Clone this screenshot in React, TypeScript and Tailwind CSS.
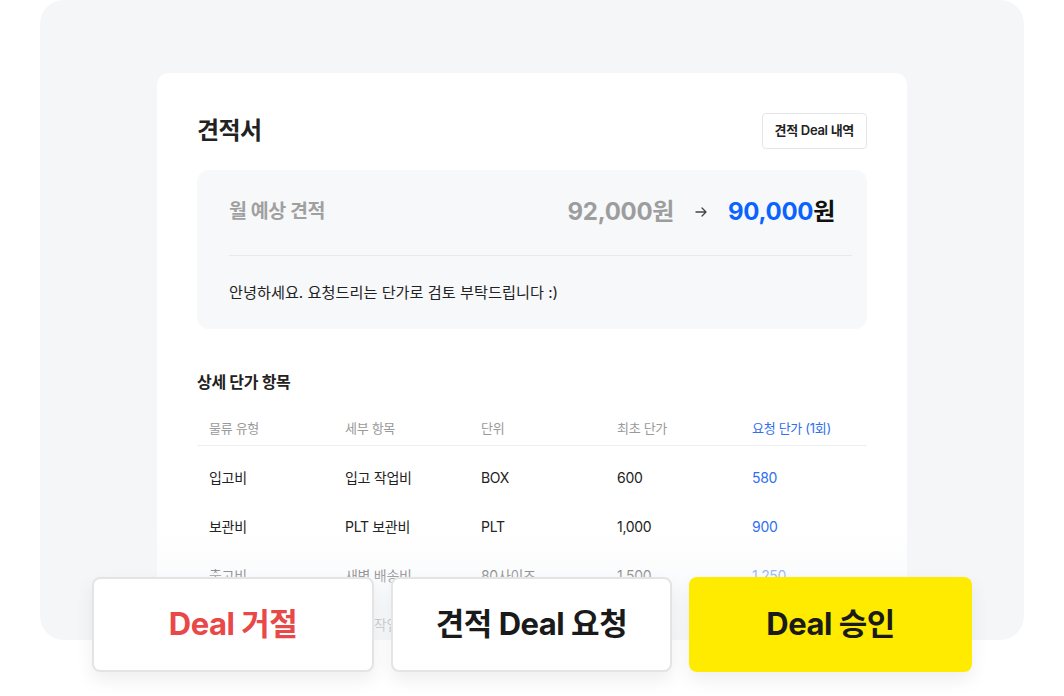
import React from "react";

const rows = [
  { type: "입고비", item: "입고 작업비", unit: "BOX", base: "600", req: "580" },
  { type: "보관비", item: "PLT 보관비", unit: "PLT", base: "1,000", req: "900" },
  { type: "출고비", item: "새벽 배송비", unit: "80사이즈", base: "1,500", req: "1,250" },
  { type: "출고비", item: "출고 작업비", unit: "BOX", base: "500", req: "450" },
];

export default function App() {
  return (
    <div
      className="w-[1064px] h-[696px] bg-white overflow-hidden text-[#222]"
      style={{ fontFamily: 'Inter, "Noto Sans CJK KR", sans-serif' }}
    >
      {/* 회색 패널 */}
      <div className="mx-[40px] h-[640px] rounded-[24px] bg-[#f5f6f8] pt-[73px] px-[117px] overflow-hidden">
        <div className="relative h-full bg-white rounded-t-[12px] px-[40px] pt-[40px] overflow-hidden">
          {/* 헤더 */}
          <div className="flex items-center justify-between h-[36px]">
            <h1 className="text-[24px] font-bold tracking-[-0.6px]">견적서</h1>
            <button className="h-[36px] px-[12px] rounded-[4px] border border-[#e3e5e8] bg-white text-[13px] font-semibold tracking-[-0.3px]">
              견적 Deal 내역
            </button>
          </div>

          {/* 요약 박스 */}
          <div className="mt-[21px] rounded-[12px] bg-[#f7f8fa] px-[32px] pt-[26px] pb-[25px]">
            <div className="flex items-center justify-between h-[32px]">
              <span className="text-[19.5px] font-bold text-[#a0a0a0] tracking-[-0.4px]">
                월 예상 견적
              </span>
              <div className="flex items-center">
                <span className="text-[24px] font-bold text-[#9d9d9d] tracking-[-0.3px]">
                  92,000원
                </span>
                <svg
                  className="mx-[20px]"
                  width="14"
                  height="14"
                  viewBox="0 0 14 14"
                  fill="none"
                  stroke="#444"
                  strokeWidth="1.3"
                  strokeLinecap="round"
                  strokeLinejoin="round"
                >
                  <path d="M2 7h10M8 3l4 4-4 4" />
                </svg>
                <span className="text-[24px] font-bold tracking-[-0.3px]">
                  <span className="text-[#0b63ff]">90,000</span>
                  <span className="text-[#111]">원</span>
                </span>
              </div>
            </div>
            <div className="mt-[27px] mr-[-17px] border-t border-[#e8e9ec]" />
            <p className="pt-[26px] text-[15.2px] leading-[22px] tracking-[0px]">
              안녕하세요. 요청드리는 단가로 검토 부탁드립니다 :)
            </p>
          </div>

          {/* 상세 단가 항목 */}
          <h2 className="mt-[41px] text-[16px] leading-[24px] font-bold tracking-[-0.3px]">
            상세 단가 항목
          </h2>
          <div className="mt-[18px]">
            <div className="grid grid-cols-[136px_136px_136px_135px_1fr] pl-[12px] h-[34px] items-center border-b border-[#eeeff1] text-[13px] text-[#9a9a9a] tracking-[-0.3px]">
              <span>물류 유형</span>
              <span>세부 항목</span>
              <span>단위</span>
              <span>최초 단가</span>
              <span className="text-[#2f6ff0]">요청 단가 (1회)</span>
            </div>
            <div className="pt-[7px]">
              {rows.map((r, i) => (
                <div
                  key={i}
                  className="grid grid-cols-[136px_136px_136px_135px_1fr] pl-[12px] h-[49px] items-center text-[14px] tracking-[-0.3px]"
                >
                  <span>{r.type}</span>
                  <span>{r.item}</span>
                  <span>{r.unit}</span>
                  <span>{r.base}</span>
                  <span className="text-[#2f6ff0]">{r.req}</span>
                </div>
              ))}
            </div>
          </div>

          {/* 하단 페이드 */}
          <div className="absolute left-0 right-0 bottom-0 h-[110px] bg-gradient-to-b from-white/0 via-[#f8f9fb]/70 to-[#f6f7f9]/85" />
        </div>
      </div>

      {/* 액션 버튼 */}
      <div className="relative z-10 -mt-[63px] flex justify-center gap-[17px]">
        <button className="w-[282px] h-[95px] rounded-[8px] bg-white border-2 border-[#e4e4e4] shadow-[0_8px_18px_rgba(0,0,0,0.07)] text-[31px] font-bold text-[#e94848] tracking-[-0.5px]">
          Deal 거절
        </button>
        <button className="w-[281px] h-[95px] rounded-[8px] bg-white border-2 border-[#e4e4e4] shadow-[0_8px_18px_rgba(0,0,0,0.07)] text-[31px] font-bold text-[#1a1a1a] tracking-[-0.5px]">
          견적 Deal 요청
        </button>
        <button className="w-[283px] h-[95px] rounded-[8px] bg-[#ffeb00] shadow-[0_8px_18px_rgba(0,0,0,0.07)] text-[31px] font-bold text-[#1a1a1a] tracking-[-0.5px]">
          Deal 승인
        </button>
      </div>
    </div>
  );
}
